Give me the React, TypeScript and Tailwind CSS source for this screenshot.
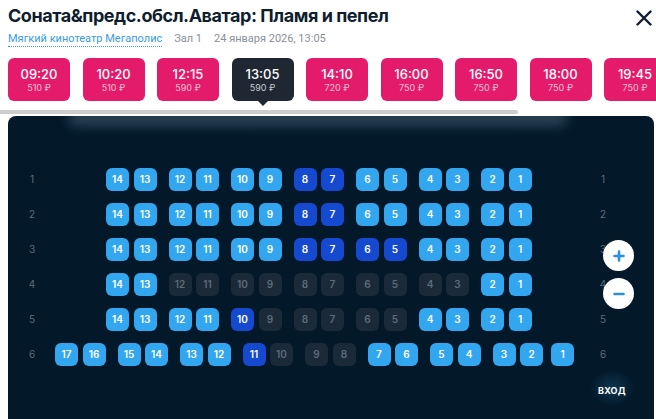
import { Fragment } from "react";

type Seat = { n: number; s: "free" | "mine" | "busy" };

const times = [
  { t: "09:20", p: "510 ₽" },
  { t: "10:20", p: "510 ₽" },
  { t: "12:15", p: "590 ₽" },
  { t: "13:05", p: "590 ₽", active: true },
  { t: "14:10", p: "720 ₽" },
  { t: "16:00", p: "750 ₽" },
  { t: "16:50", p: "750 ₽" },
  { t: "18:00", p: "750 ₽" },
  { t: "19:45", p: "750 ₽" },
];

// builds groups of seats from number pairs, marking taken / selected ones
function groups(nums: number[][], mine: number[], busy: number[]): Seat[][] {
  return nums.map((g) =>
    g.map((n) => ({
      n,
      s: mine.includes(n) ? "mine" : busy.includes(n) ? "busy" : "free",
    }))
  );
}

const pairs14 = [[14, 13], [12, 11], [10, 9], [8, 7], [6, 5], [4, 3], [2, 1]];
const pairs17 = [[17, 16], [15, 14], [13, 12], [11, 10], [9, 8], [7, 6], [5, 4], [3, 2, 1]];

const rows = [
  { r: 1, wide: false, g: groups(pairs14, [8, 7], []) },
  { r: 2, wide: false, g: groups(pairs14, [8, 7], []) },
  { r: 3, wide: false, g: groups(pairs14, [8, 7, 6, 5], []) },
  { r: 4, wide: false, g: groups(pairs14, [], [12, 11, 10, 9, 8, 7, 6, 5, 4, 3]) },
  { r: 5, wide: false, g: groups(pairs14, [10], [9, 8, 7, 6, 5]) },
  { r: 6, wide: true, g: groups(pairs17, [11], [10, 9, 8]) },
];

function SeatBox({ seat, last }: { seat: Seat; last?: boolean }) {
  const color =
    seat.s === "free"
      ? "bg-[#33a6f0] text-white"
      : seat.s === "mine"
      ? "bg-[#1449d0] text-white"
      : "bg-[#1b2a38] text-[#5d6c7a]";
  return (
    <div
      className={`w-[23px] h-[23px] rounded-[6px] flex items-center justify-center text-[10px] font-semibold ${color} ${
        last ? "ml-[3.5px]" : ""
      }`}
    >
      {seat.n}
    </div>
  );
}

export default function App() {
  return (
    <div className="w-[656px] h-[419px] bg-white overflow-hidden font-['Inter',sans-serif] relative">
      {/* header */}
      <div className="flex items-start justify-between pl-2 pr-[3px] pt-[4px]">
        <h1 className="text-[18px] leading-[24px] font-bold text-[#0f1d2e] tracking-[-0.45px]">
          Соната&amp;предс.обсл.Аватар: Пламя и пепел
        </h1>
        <svg width="16" height="16" viewBox="0 0 16 16" className="mt-[6px] mr-[1px]">
          <path d="M1.5 1.5 L14.5 14.5 M14.5 1.5 L1.5 14.5" stroke="#0f1d2e" strokeWidth="2.4" strokeLinecap="round" />
        </svg>
      </div>
      <div className="flex items-center gap-3 pl-2 mt-[3px] text-[11px] leading-[16px] font-['Roboto',sans-serif]">
        <span className="text-[#3a9be6] border-b border-dotted border-[#3a9be6] leading-[14px]">Мягкий кинотеатр Мегаполис</span>
        <span className="text-[#8a9099]">Зал 1</span>
        <span className="text-[#8a9099]">24 января 2026, 13:05</span>
      </div>

      {/* sessions */}
      <div className="flex gap-[12.5px] pl-2 mt-[11px] w-max">
        {times.map((x) => (
          <div
            key={x.t}
            className={`relative w-[62px] h-[43px] shrink-0 rounded-[6px] flex flex-col items-center justify-center ${
              x.active ? "bg-[#1f2733]" : "bg-[#e41b6a]"
            }`}
          >
            <div className="text-white text-[13px] leading-[15px] font-medium">{x.t}</div>
            <div className={`text-[9px] leading-[11px] ${x.active ? "text-[#c9ccd2]" : "text-[#f7c0d4]"}`}>{x.p}</div>
            {x.active && (
              <div className="absolute left-1/2 -bottom-[5px] -translate-x-1/2 w-0 h-0 border-l-[5px] border-r-[5px] border-t-[5px] border-l-transparent border-r-transparent border-t-[#1f2733]" />
            )}
          </div>
        ))}
      </div>

      {/* scrollbar */}
      <div className="mt-[9px] h-[4px] w-[518px] bg-[#cdcdcd] rounded-r-full" />

      {/* hall */}
      <div className="relative mt-[2px] ml-2 mr-[2px] h-[320px] rounded-t-[8px] bg-[#03192a] overflow-hidden">
        <div className="absolute left-[60px] right-[86px] -top-[6px] h-[16px] rounded-full bg-[#3b5668] blur-[6px] opacity-70" />

        <div className="flex flex-col gap-[12px] pt-[52px] pl-[16px]">
          {rows.map((row) => (
            <div key={row.r} className="flex items-center h-[23px]">
              <div className="w-[16px] text-center text-[10px] text-[#5d6b78]">{row.r}</div>
              <div className={`w-[555px] flex gap-[12px] ${row.wide ? "pl-[15px]" : "pl-[66px]"}`}>
                {row.g.map((g, gi) => (
                  <div key={gi} className="flex gap-[4.5px]">
                    {g.map((s, si) => (
                      <Fragment key={s.n}>
                        <SeatBox seat={s} last={g.length === 3 && si === 2} />
                      </Fragment>
                    ))}
                  </div>
                ))}
              </div>
              <div className="w-[16px] text-center text-[10px] text-[#5d6b78]">{row.r}</div>
            </div>
          ))}
        </div>

        {/* zoom controls */}
        <div className="absolute left-[595px] top-[124px] flex flex-col gap-[7px]">
          <div className="w-[31px] h-[31px] rounded-full bg-white flex items-center justify-center">
            <svg width="12" height="12" viewBox="0 0 12 12">
              <path d="M6 1.5 V10.5 M1.5 6 H10.5" stroke="#2b8fe0" strokeWidth="2.6" strokeLinecap="round" />
            </svg>
          </div>
          <div className="w-[31px] h-[31px] rounded-full bg-white flex items-center justify-center">
            <svg width="12" height="12" viewBox="0 0 12 12">
              <path d="M1.5 6 H10.5" stroke="#2b8fe0" strokeWidth="2.6" strokeLinecap="round" />
            </svg>
          </div>
        </div>

        <div className="absolute left-[582px] top-[254px] px-[8px] py-[6px] rounded-full bg-[radial-gradient(closest-side,#0f3550,transparent)]">
          <span className="text-white text-[9px] font-bold tracking-[0.2px]">ВХОД</span>
        </div>
      </div>
    </div>
  );
}
